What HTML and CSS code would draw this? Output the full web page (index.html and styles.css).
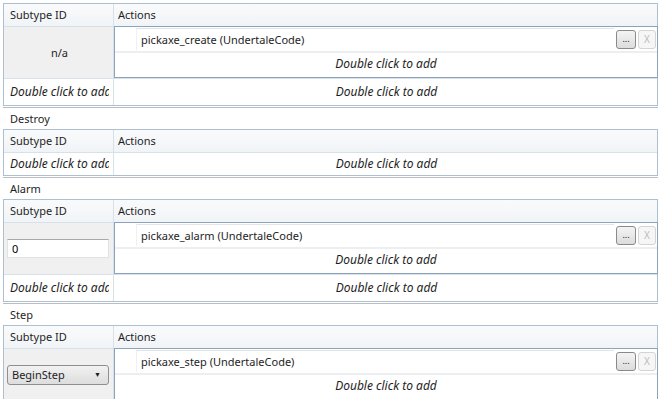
FILE: index.html
```html
<!DOCTYPE html>
<html lang="en">
<head>
    <meta charset="UTF-8">
    <title>Object Events</title>
    <link rel="stylesheet" href="styles.css">
</head>
<body>
    <!-- Create -->
    <section class="event">
        <div class="grid">
            <div class="row head">
                <div class="cell id">Subtype ID</div>
                <div class="cell">Actions</div>
            </div>
            <div class="row main">
                <div class="cell id gray center">n/a</div>
                <div class="actions">
                    <div class="action">
                        <div class="field">pickaxe_create (UndertaleCode)</div>
                        <button class="btn">...</button>
                        <button class="btn off">X</button>
                    </div>
                    <div class="add">Double click to add</div>
                </div>
            </div>
            <div class="row foot">
                <div class="cell id italic"><span class="clip">Double click to add</span></div>
                <div class="cell italic center">Double click to add</div>
            </div>
        </div>
    </section>

    <!-- Destroy -->
    <section class="event">
        <h2>Destroy</h2>
        <div class="grid">
            <div class="row head">
                <div class="cell id">Subtype ID</div>
                <div class="cell">Actions</div>
            </div>
            <div class="row foot short">
                <div class="cell id italic"><span class="clip">Double click to add</span></div>
                <div class="cell italic center">Double click to add</div>
            </div>
        </div>
    </section>

    <!-- Alarm -->
    <section class="event">
        <h2>Alarm</h2>
        <div class="grid">
            <div class="row head">
                <div class="cell id">Subtype ID</div>
                <div class="cell">Actions</div>
            </div>
            <div class="row main">
                <div class="cell id gray">
                    <input class="num" type="text" value="0">
                </div>
                <div class="actions">
                    <div class="action">
                        <div class="field">pickaxe_alarm (UndertaleCode)</div>
                        <button class="btn">...</button>
                        <button class="btn off">X</button>
                    </div>
                    <div class="add">Double click to add</div>
                </div>
            </div>
            <div class="row foot">
                <div class="cell id italic"><span class="clip">Double click to add</span></div>
                <div class="cell italic center">Double click to add</div>
            </div>
        </div>
    </section>

    <!-- Step -->
    <section class="event">
        <h2>Step</h2>
        <div class="grid">
            <div class="row head">
                <div class="cell id">Subtype ID</div>
                <div class="cell">Actions</div>
            </div>
            <div class="row main">
                <div class="cell id gray">
                    <div class="select">BeginStep <span class="arrow">&#9660;</span></div>
                </div>
                <div class="actions">
                    <div class="action">
                        <div class="field">pickaxe_step (UndertaleCode)</div>
                        <button class="btn">...</button>
                        <button class="btn off">X</button>
                    </div>
                    <div class="add">Double click to add</div>
                </div>
            </div>
        </div>
    </section>
</body>
</html>
```

FILE: styles.css
```css
* {
    margin: 0;
    padding: 0;
    box-sizing: border-box;
}

body {
    font-family: 'Noto Sans', sans-serif;
    font-size: 11px;
    color: #1e1e1e;
    background: #fff;
    padding: 3px 2px 0 3px;
    height: 399px;
    overflow: hidden;
}

/* Event blocks */
.event + .event {
    border-top: 1px solid #b9bec4;
    margin-top: 1px;
}

.event h2 {
    font-size: 11px;
    font-weight: normal;
    height: 21px;
    line-height: 21px;
    padding-left: 7px;
}

.grid {
    border: 1px solid #aebfd0;
}

.row {
    display: grid;
    grid-template-columns: 110px 1fr;
}

.row + .row {
    border-top: 1px solid #d8e0e8;
}

.cell {
    padding: 0 4px 0 6px;
    white-space: nowrap;
    overflow: hidden;
}

.cell.id {
    border-right: 1px solid #d8e0e8;
}

.clip {
    display: block;
    width: 99px;
    overflow: hidden;
}

.head {
    height: 22px;
    line-height: 21px;
    background: linear-gradient(#f9fafb, #f1f4f7);
}

.head .cell:last-child {
    padding-left: 4px;
}

.main {
    height: 52px;
}

.foot {
    height: 27px;
    line-height: 26px;
}

.foot.short {
    height: 23px;
    line-height: 22px;
}

.gray {
    background: #f0f0f0;
    display: flex;
    align-items: center;
}

.center {
    text-align: center;
    justify-content: center;
}

.italic {
    font-style: italic;
    font-size: 12px;
}

/* Actions list */
.actions {
    border: 1px solid #8ba3bd;
    margin: -1px -1px 0 0;
    display: flex;
    flex-direction: column;
}

.action {
    display: flex;
    align-items: center;
    gap: 2px;
    height: 26px;
    padding: 2px 1px 2px 21px;
    border-bottom: 2px solid #eceff2;
}

.field {
    flex: 1;
    height: 22px;
    line-height: 21px;
    padding-left: 4px;
    border-top: 1px solid #e4e4e4;
    border-left: 1px solid #f0f0f0;
    background: #fff;
}

.btn {
    width: 20px;
    height: 19px;
    font-family: 'Noto Sans', sans-serif;
    font-size: 9px;
    line-height: 14px;
    color: #222;
    border: 1px solid #8a8a8a;
    border-radius: 3px;
    background: linear-gradient(#f4f4f4, #dcdcdc);
}

.btn.off {
    width: 18px;
    color: #bcbcbc;
    border-color: #d4d4d4;
    background: #f6f6f6;
    font-size: 10px;
}

.add {
    flex: 1;
    font-style: italic;
    font-size: 12px;
    text-align: center;
    line-height: 22px;
}

/* Subtype editors */
.num {
    width: 102px;
    height: 19px;
    margin-left: -3px;
    padding-left: 4px;
    font-family: 'Noto Sans', sans-serif;
    font-size: 11px;
    border: 1px solid #e2e2e2;
    border-top-color: #a9a9a9;
    background: #fff;
    outline: none;
}

.select {
    position: relative;
    width: 103px;
    height: 20px;
    margin-left: -3px;
    padding-left: 4px;
    line-height: 18px;
    border: 1px solid #8e8f8f;
    border-radius: 3px;
    background: linear-gradient(#f2f2f2, #dddddd);
}

.arrow {
    position: absolute;
    right: 7px;
    font-size: 7px;
}
```
